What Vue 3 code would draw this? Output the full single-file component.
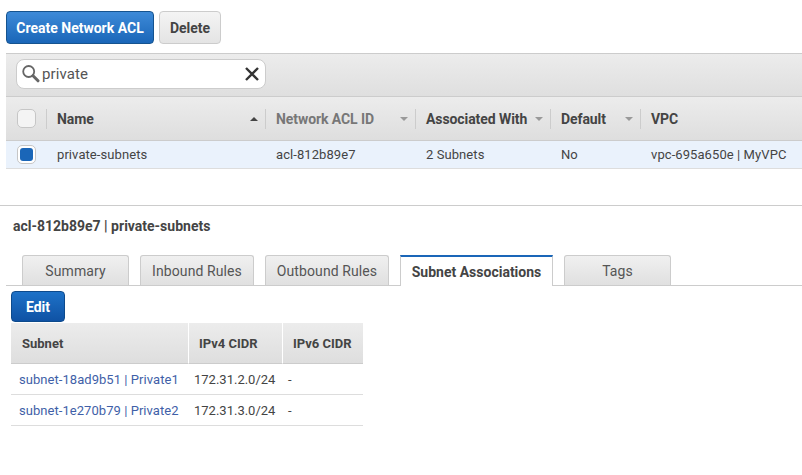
<template>
  <div class="page">
    <div class="actions">
      <button class="btn btn-primary">Create Network ACL</button>
      <button class="btn btn-default">Delete</button>
    </div>

    <div class="filter-bar">
      <div class="search">
        <svg class="search-icon" width="18" height="18" viewBox="0 0 18 18">
          <circle cx="6.7" cy="6.5" r="5.5" fill="none" stroke="#666" stroke-width="1.8" />
          <path d="M11 10.8l5 5" stroke="#666" stroke-width="3" stroke-linecap="round" />
        </svg>
        <span class="search-text">private</span>
        <svg class="clear-icon" width="14" height="14" viewBox="0 0 14 14">
          <path d="M1 1l12 12M13 1L1 13" stroke="#333" stroke-width="2.4" />
        </svg>
      </div>
    </div>

    <div class="grid-head">
      <div class="check-cell"><span class="check"></span></div>
      <div
        v-for="col in columns"
        :key="col.label"
        class="head-cell"
        :class="{ muted: col.muted }"
        :style="{ width: col.width + 'px' }"
      >
        <span>{{ col.label }}</span>
        <span v-if="col.sort" class="caret" :class="col.sort"></span>
      </div>
    </div>
    <div class="grid-row">
      <div class="check-cell"><span class="check checked"><i></i></span></div>
      <div
        v-for="cell in rowCells"
        :key="cell.text"
        class="row-cell"
        :style="{ width: cell.width + 'px' }"
      >{{ cell.text }}</div>
    </div>

    <div class="detail">
      <div class="detail-title">acl-812b89e7 | private-subnets</div>
      <div class="tabs">
        <div
          v-for="tab in tabs"
          :key="tab.label"
          class="tab"
          :class="{ active: tab.active }"
          :style="{ width: tab.width + 'px' }"
        >{{ tab.label }}</div>
      </div>
      <button class="btn btn-edit">Edit</button>
      <table class="assoc">
        <thead>
          <tr>
            <th class="c1">Subnet</th>
            <th class="c2">IPv4 CIDR</th>
            <th class="c3">IPv6 CIDR</th>
          </tr>
        </thead>
        <tbody>
          <tr v-for="s in subnets" :key="s.id">
            <td class="link">{{ s.id }} | {{ s.name }}</td>
            <td>{{ s.cidr }}</td>
            <td>-</td>
          </tr>
        </tbody>
      </table>
    </div>
  </div>
</template>

<script setup>
const columns = [
  { label: 'Name', width: 219, sort: 'up' },
  { label: 'Network ACL ID', width: 150, sort: 'down', muted: true },
  { label: 'Associated With', width: 135, sort: 'down' },
  { label: 'Default', width: 90, sort: 'down' },
  { label: 'VPC', width: 162 },
]

const rowCells = [
  { text: 'private-subnets', width: 219 },
  { text: 'acl-812b89e7', width: 150 },
  { text: '2 Subnets', width: 135 },
  { text: 'No', width: 90 },
  { text: 'vpc-695a650e | MyVPC', width: 162 },
]

const tabs = [
  { label: 'Summary', width: 107 },
  { label: 'Inbound Rules', width: 114 },
  { label: 'Outbound Rules', width: 124 },
  { label: 'Subnet Associations', width: 153, active: true },
  { label: 'Tags', width: 107 },
]

const subnets = [
  { id: 'subnet-18ad9b51', name: 'Private1', cidr: '172.31.2.0/24' },
  { id: 'subnet-1e270b79', name: 'Private2', cidr: '172.31.3.0/24' },
]
</script>

<style scoped>
.page {
  width: 802px;
  height: 475px;
  overflow: hidden;
  background: #fff;
  font-family: Roboto, "Liberation Sans", sans-serif;
  font-size: 13px;
  color: #444;
}

.actions {
  display: flex;
  gap: 5px;
  padding: 11px 0 0 6px;
  height: 53px;
  box-sizing: border-box;
}

.btn {
  font-family: inherit;
  font-size: 14px;
  font-weight: 700;
  border-radius: 4px;
  padding: 0;
  box-sizing: border-box;
}

.btn-primary {
  width: 148px;
  height: 33px;
  color: #fff;
  border: 1px solid #15538f;
  background: linear-gradient(#3d8ad8, #1a66b8);
}

.btn-default {
  width: 62px;
  height: 33px;
  color: #444;
  border: 1px solid #ccc;
  background: linear-gradient(#f4f4f4, #e4e4e4);
}

.filter-bar {
  margin-left: 6px;
  height: 44px;
  box-sizing: border-box;
  border-top: 1px solid #ccc;
  border-bottom: 1px solid #ccc;
  background: linear-gradient(#ececec, #dfdfdf);
  padding: 5px 0 0 10px;
}

.search {
  width: 250px;
  height: 30px;
  box-sizing: border-box;
  border: 1px solid #ccc;
  border-radius: 8px;
  background: #fff;
  display: flex;
  align-items: center;
  padding: 0 6px 0 5px;
}

.search-text {
  margin-left: 2px;
  font-size: 15px;
  letter-spacing: 0.1px;
  color: #555;
  flex: 1;
}

.grid-head {
  margin-left: 6px;
  height: 44px;
  box-sizing: border-box;
  display: flex;
  align-items: center;
  border-bottom: 1px solid #ccc;
  background: linear-gradient(#ececec, #dedede);
}

.check-cell {
  width: 40px;
  flex: none;
  display: flex;
  padding-left: 11px;
  box-sizing: border-box;
}

.check {
  width: 19px;
  height: 19px;
  box-sizing: border-box;
  border: 1px solid #c6c6c6;
  border-radius: 5px;
  background: #f4f4f4;
  display: flex;
  align-items: center;
  justify-content: center;
}

.check.checked {
  background: #fff;
}

.check i {
  display: block;
  width: 13px;
  height: 13px;
  border-radius: 3px;
  background: #1a66b8;
}

.head-cell {
  flex: none;
  height: 20px;
  box-sizing: border-box;
  border-left: 1px solid #ccc;
  padding: 0 7px 0 10px;
  display: flex;
  align-items: center;
  justify-content: space-between;
  font-size: 14px;
  font-weight: 700;
  letter-spacing: -0.08px;
}

.head-cell.muted {
  color: #777;
}

.caret {
  width: 0;
  height: 0;
  border-left: 4px solid transparent;
  border-right: 4px solid transparent;
}

.caret.up {
  border-bottom: 4px solid #444;
}

.caret.down {
  border-top: 4px solid #999;
}

.grid-row {
  margin-left: 6px;
  height: 28px;
  box-sizing: border-box;
  display: flex;
  align-items: center;
  background: #eaf2fc;
  border-bottom: 1px solid #ddd;
}

.row-cell {
  flex: none;
  padding-left: 11px;
  box-sizing: border-box;
  letter-spacing: 0.08px;
}

.detail {
  margin-top: 36px;
  border-top: 1px solid #ccc;
}

.detail-title {
  padding: 12px 0 0 13px;
  font-size: 14px;
  font-weight: 700;
  line-height: 16px;
}

.tabs {
  margin: 21px 0 0 6px;
  height: 31px;
  box-sizing: border-box;
  display: flex;
  gap: 11px;
  padding-left: 16px;
  border-bottom: 1px solid #ccc;
}

.tab {
  height: 30px;
  flex: none;
  box-sizing: border-box;
  border: 1px solid #ccc;
  border-bottom: none;
  border-radius: 3px 3px 0 0;
  background: linear-gradient(#f0f0f0, #e0e0e0);
  text-align: center;
  font-size: 14px;
  line-height: 30px;
  letter-spacing: 0.1px;
  color: #555;
}

.tab.active {
  height: 31px;
  border-top: 2px solid #1a66b8;
  background: #fff;
  font-weight: 700;
  letter-spacing: 0;
  color: #444;
  line-height: 31px;
  border-radius: 0;
}

.btn-edit {
  display: block;
  width: 54px;
  height: 31px;
  margin: 5px 0 0 11px;
  color: #fff;
  border: 1px solid #0d4a8c;
  background: linear-gradient(#1e72c8, #0f52a4);
}

.assoc {
  margin: 1px 0 0 11px;
  border-collapse: separate;
  border-spacing: 0;
  table-layout: fixed;
  width: 352px;
}

.assoc th {
  box-sizing: border-box;
  height: 41px;
  padding: 0 0 0 10px;
  text-align: left;
  font-size: 13px;
  font-weight: 700;
  background: linear-gradient(#ececec, #dedede);
  border-bottom: 1px solid #ccc;
  border-left: 1px solid #fff;
}

.assoc th:first-child {
  border-left: none;
  padding-left: 11px;
}

.assoc .c1 { width: 177px; }
.assoc .c2 { width: 94px; }
.assoc .c3 { width: 81px; }

.assoc td {
  box-sizing: border-box;
  height: 31px;
  padding: 0 0 0 6px;
  border-bottom: 1px solid #ddd;
}

.assoc td.link {
  padding-left: 8px;
  letter-spacing: 0.05px;
  color: #3f5fa8;
}
</style>

<style>
html, body { margin: 0; background: #fff; }
</style>
